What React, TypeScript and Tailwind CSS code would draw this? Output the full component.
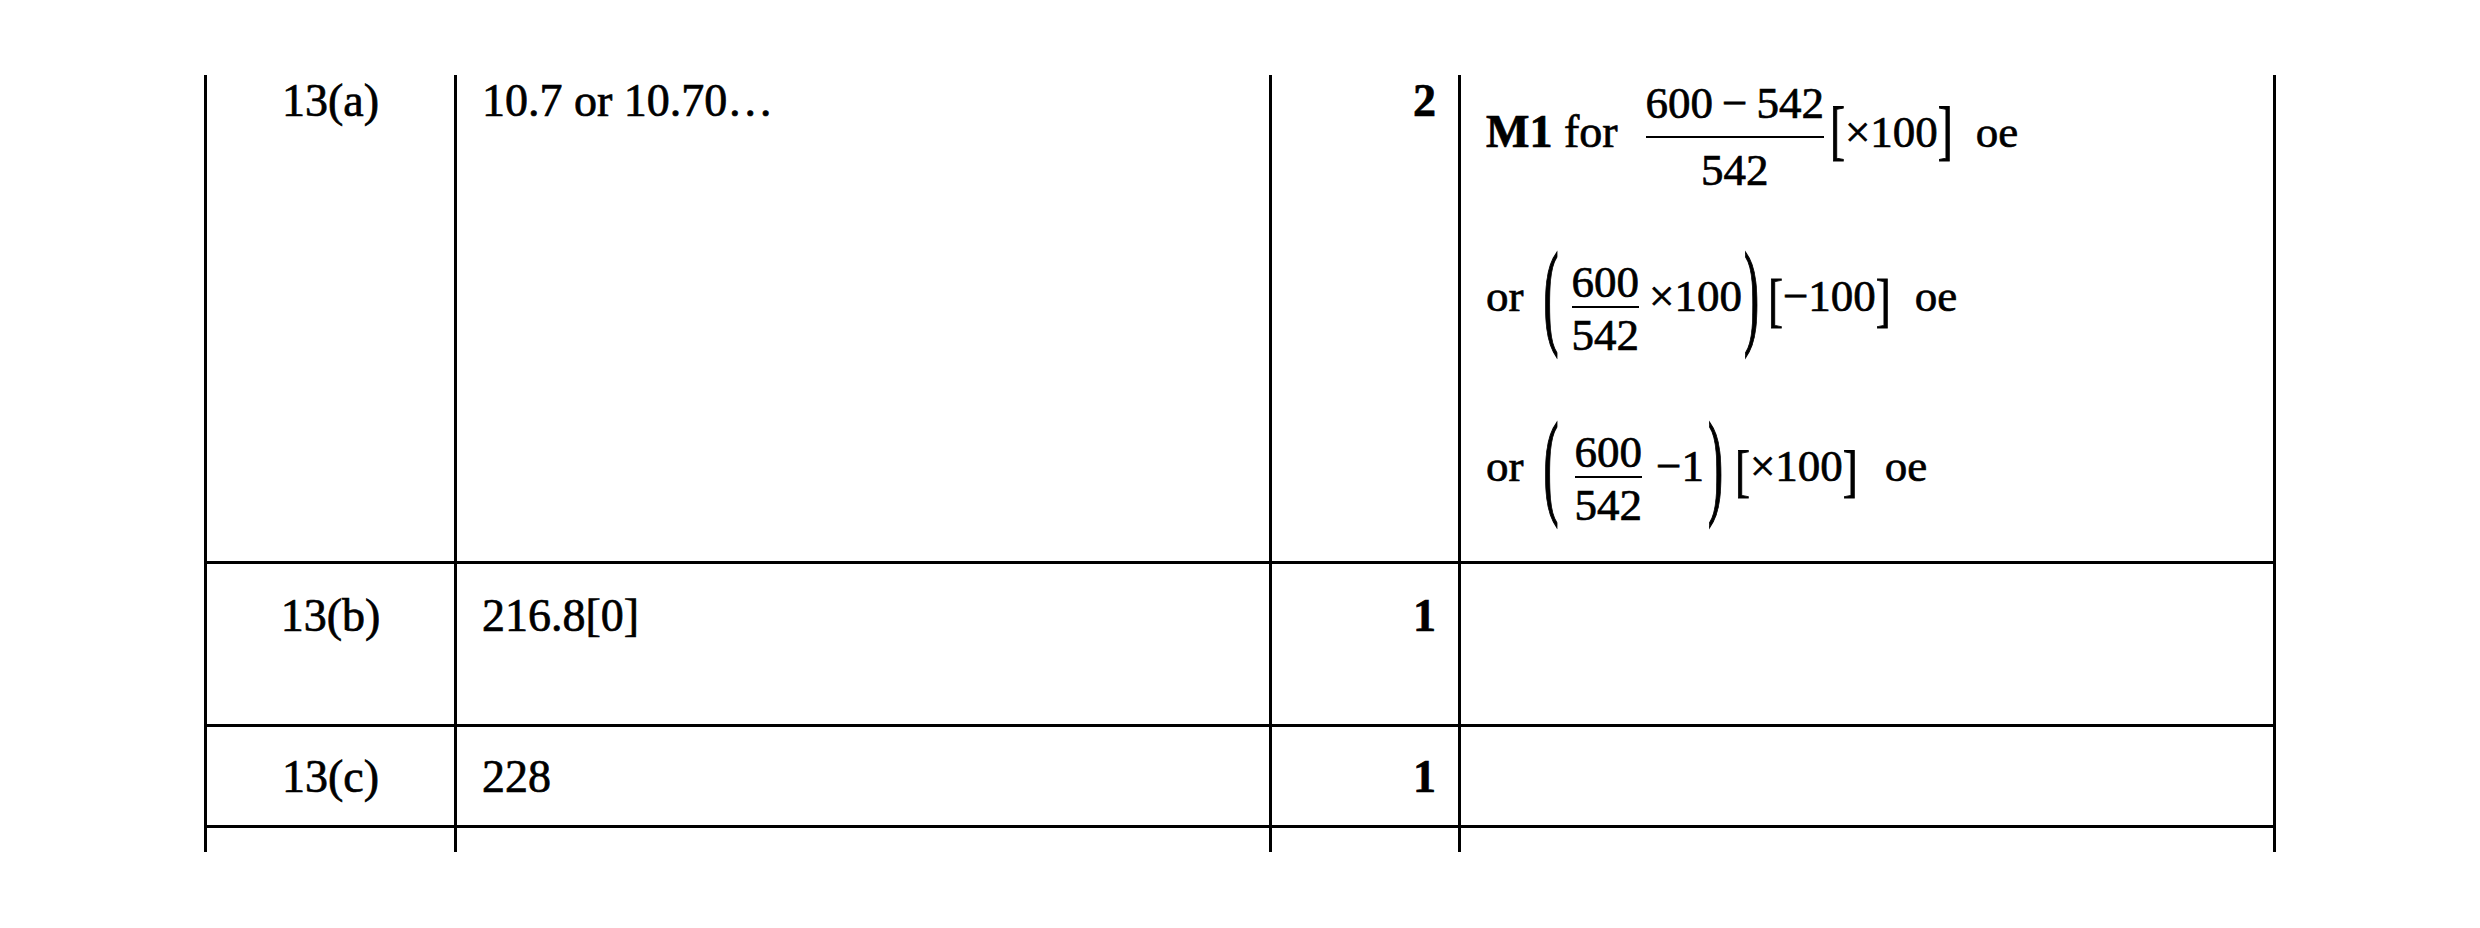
import type { ReactNode } from 'react';

// stretched delimiter: ink centre sits on the box centre thanks to pb-[9px]
function Delim({ ch, className }: { ch: string; className: string }) {
  return <span className={`inline-block leading-none pb-[9px] ${className}`}>{ch}</span>;
}

function Frac({ num, den, big, className }: { num: string; den: string; big?: boolean; className: string }) {
  return (
    <span className={`inline-flex flex-col items-stretch ${className}`}>
      <span className={`text-center leading-none ${big ? 'pb-[10px]' : 'pt-[4px] pb-[1px]'}`}>{num}</span>
      <span className="h-[2px] bg-black" />
      <span className={`text-center leading-none ${big ? 'pt-[10px]' : 'pt-[5px]'}`}>{den}</span>
    </span>
  );
}

function MathLine({ children }: { children: ReactNode }) {
  return <div className="flex h-[110px] items-center whitespace-pre text-[45px]">{children}</div>;
}

function Cell({ children, className = '' }: { children?: ReactNode; className?: string }) {
  return <div className={`border-l-[3px] border-black ${className}`}>{children}</div>;
}

export default function App() {
  return (
    <div className="min-h-screen bg-white pl-[204px] pt-[75px] font-['Liberation_Serif','Times_New_Roman',serif] text-[46px] leading-[52px] text-black [-webkit-text-stroke:0.7px_black]">
      {/* 13(a) */}
      <div className="grid h-[489px] w-[2072px] grid-cols-[250px_815px_189px_818px] border-b-[3px] border-black">
        <Cell className="text-center">13(a)</Cell>
        <Cell className="pl-[25px]">10.7 or 10.70…</Cell>
        <Cell className="pr-[22px] text-right font-bold">2</Cell>
        <Cell className="border-r-[3px] pl-[25px] pt-[7px]">
          <div className="flex flex-col gap-[60px]">
            <MathLine>
              <span className="pb-[10px] text-[46px] leading-none">
                <b>M1</b> for
              </span>
              <Frac num={'600\u2009\u2212\u2009542'} den="542" big className="ml-[26px] px-[2px]" />
              <Delim ch="[" className="ml-[4px] scale-y-[1.45]" />
              <span className="pb-[10px] leading-none">×100</span>
              <Delim ch="]" className="scale-y-[1.45]" />
              <span className="ml-[23px] pb-[10px] leading-none">oe</span>
            </MathLine>
            <MathLine>
              <span className="pb-[22px] leading-none">or</span>
              <Delim ch="(" className="ml-[20px] scale-y-[2.6]" />
              <Frac num="600" den="542" className="ml-[11px] px-[2px]" />
              <span className="ml-[8px] pb-[22px] leading-none">×100</span>
              <Delim ch=")" className="ml-[2px] scale-y-[2.6]" />
              <Delim ch="[" className="ml-[9px] scale-y-[1.32]" />
              <span className="pb-[22px] leading-none">{'\u2212100'}</span>
              <Delim ch="]" className="scale-y-[1.32]" />
              <span className="ml-[24px] pb-[22px] leading-none">oe</span>
            </MathLine>
            <MathLine>
              <span className="pb-[22px] leading-none">or</span>
              <Delim ch="(" className="ml-[20px] scale-y-[2.6]" />
              <Frac num="600" den="542" className="ml-[12px] px-[4px]" />
              <span className="ml-[10px] pb-[22px] leading-none">{'\u22121'}</span>
              <Delim ch=")" className="ml-[4px] scale-y-[2.6]" />
              <Delim ch="[" className="ml-[12px] scale-y-[1.25]" />
              <span className="pb-[22px] leading-none">×100</span>
              <Delim ch="]" className="scale-y-[1.25]" />
              <span className="ml-[27px] pb-[22px] leading-none">oe</span>
            </MathLine>
          </div>
        </Cell>
      </div>

      {/* 13(b) */}
      <div className="grid h-[163px] w-[2072px] grid-cols-[250px_815px_189px_818px] border-b-[3px] border-black">
        <Cell className="pt-[26px] text-center">13(b)</Cell>
        <Cell className="pl-[25px] pt-[26px]">216.8[0]</Cell>
        <Cell className="pr-[22px] pt-[26px] text-right font-bold">1</Cell>
        <Cell className="border-r-[3px]" />
      </div>

      {/* 13(c) */}
      <div className="grid h-[101px] w-[2072px] grid-cols-[250px_815px_189px_818px] border-b-[3px] border-black">
        <Cell className="pt-[24px] text-center">13(c)</Cell>
        <Cell className="pl-[25px] pt-[24px]">228</Cell>
        <Cell className="pr-[22px] pt-[24px] text-right font-bold">1</Cell>
        <Cell className="border-r-[3px]" />
      </div>

      {/* start of the next row, cut off */}
      <div className="grid h-[24px] w-[2072px] grid-cols-[250px_815px_189px_818px]">
        <Cell />
        <Cell />
        <Cell />
        <Cell className="border-r-[3px]" />
      </div>
    </div>
  );
}
